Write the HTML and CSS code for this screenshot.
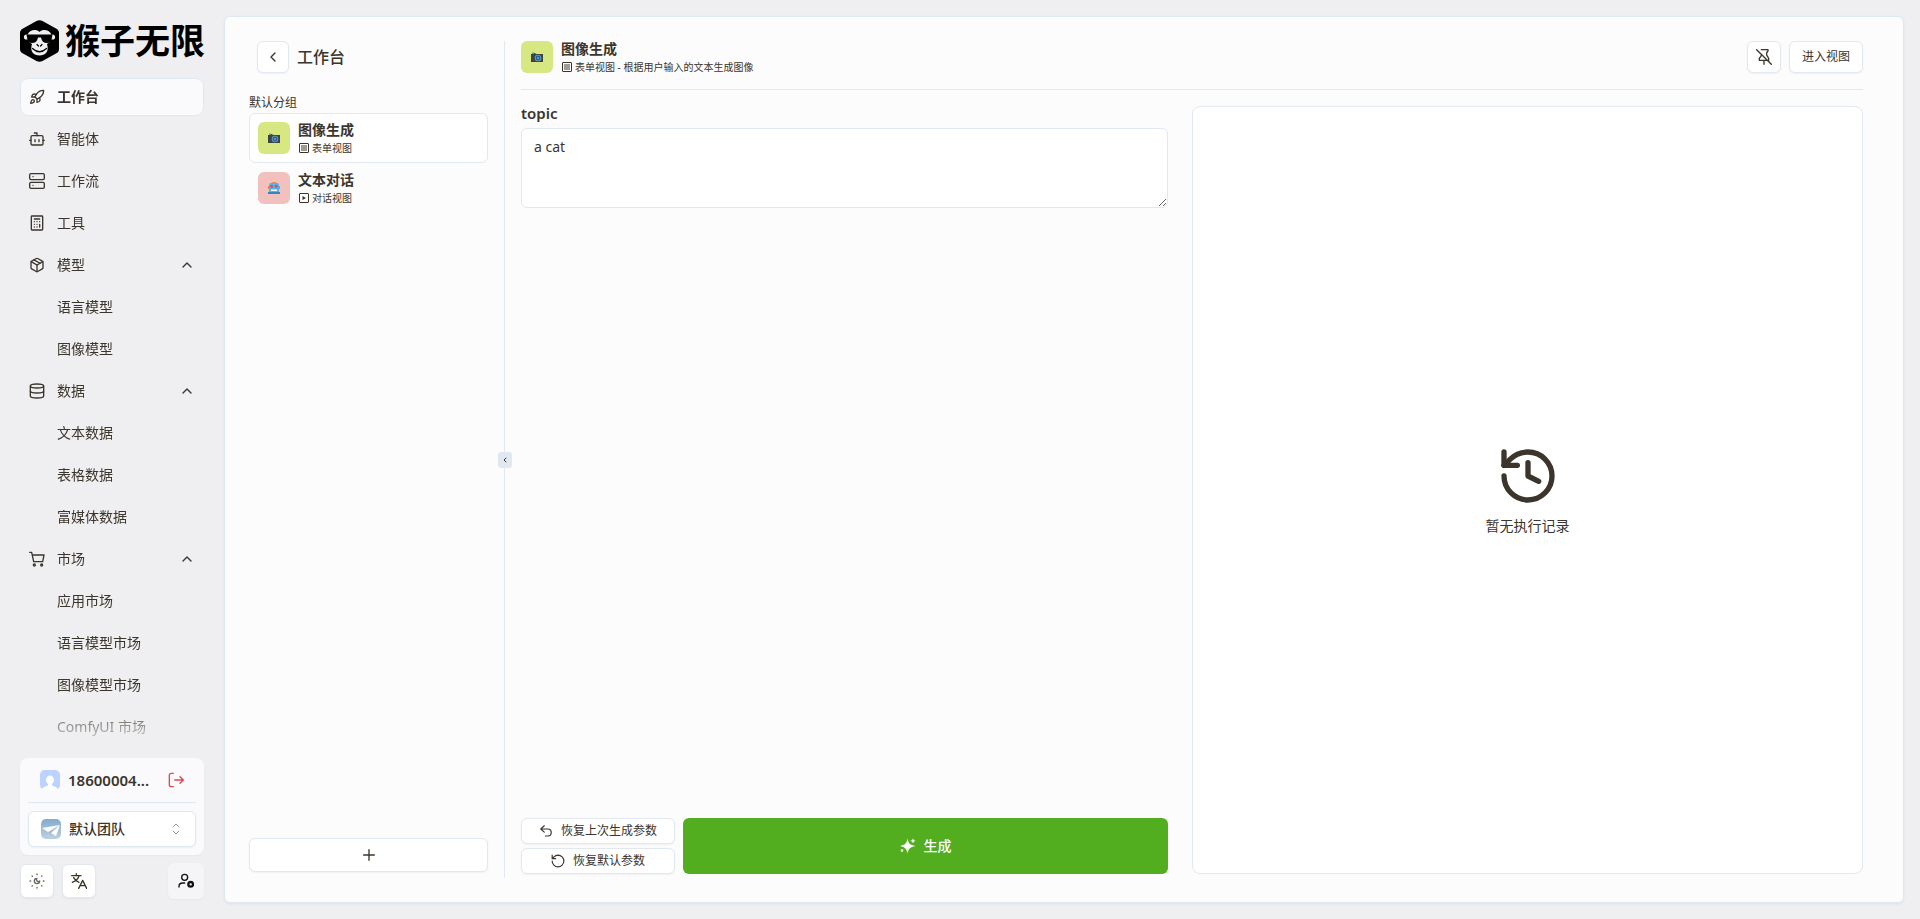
FILE: index.html
```html
<!DOCTYPE html>
<html lang="zh-CN">
<head>
    <meta charset="UTF-8">
    <meta name="viewport" content="width=device-width, initial-scale=1.0">
    <title>工作台</title>
    <link rel="stylesheet" href="styles.css">
</head>
<body>
    <aside class="sidebar">
        <div class="logo">
            <svg class="logo-mark" viewBox="0 0 39 42">
                <path d="M16.500 1 Q19.500 -.6 22.500 1 L36 8.500 Q39 10 39 13 V29 Q39 32 36 33.500 L22.500 41 Q19.500 42.600 16.500 41 L3 33.500 Q0 32 0 29 V13 Q0 10 3 8.500Z" fill="#000"/>
                <circle cx="6.500" cy="17" r="2.600" fill="#efeff1"/>
                <circle cx="32.500" cy="17" r="2.600" fill="#efeff1"/>
                <path d="M19.500 12 C16 8.500 9 10 7.500 15 C6.500 20 9 22 12 24 C9.500 32 14 35.500 19.500 35.500 S29.500 32 27 24 C30 22 32.500 20 31.500 15 C30 10 23 8.500 19.500 12Z" fill="#efeff1"/>
                <path d="M6.500 14.500 H32.500 L31.500 20 Q30.500 23 27 23 Q22 23 21 17.500 H18 Q17 23 12 23 Q8.500 23 7.500 20Z" fill="#000"/>
                <path d="M17 24.500 l1.500 1.500 M22 24.500 l-1.500 1.500 M12.500 28.500 Q19.500 35 26.500 28.500" fill="none" stroke="#000" stroke-width="1.200" stroke-linecap="round"/>
            </svg>
            <span class="logo-text">猴子无限</span>
        </div>

        <nav class="nav">
            <a class="nav-item active" href="#">
                <svg class="icon" viewBox="0 0 24 24"><path d="M4.500 16.500c-1.500 1.260-2 5-2 5s3.740-.5 5-2c.71-.84.7-2.130-.09-2.910a2.180 2.180 0 0 0-2.910-.09z"/><path d="m12 15-3-3a22 22 0 0 1 2-3.950A12.880 12.880 0 0 1 22 2c0 2.720-.78 7.500-6 11a22.350 22.350 0 0 1-4 2z"/><path d="M9 12H4s.55-3.030 2-4c1.620-1.080 5 0 5 0"/><path d="M12 15v5s3.030-.55 4-2c1.080-1.620 0-5 0-5"/></svg>
                <span>工作台</span>
            </a>
            <a class="nav-item" href="#">
                <svg class="icon" viewBox="0 0 24 24"><path d="M12 7V3H8"/><rect width="18" height="14" x="3" y="7" rx="2"/><path d="M1 14h2M21 14h2M15 13v3M9 13v3"/></svg>
                <span>智能体</span>
            </a>
            <a class="nav-item" href="#">
                <svg class="icon" viewBox="0 0 24 24"><rect width="22" height="9" x="1" y="1" rx="2"/><rect width="22" height="9" x="1" y="14" rx="2"/><path d="M6 5.500h.01M6 18.500h.01"/></svg>
                <span>工作流</span>
            </a>
            <a class="nav-item" href="#">
                <svg class="icon" viewBox="0 0 24 24"><rect width="17" height="21" x="3.500" y="1.500" rx="1"/><path d="M8 6h8M16 14v4M16 10h.01M12 10h.01M8 10h.01M12 14h.01M8 14h.01M12 18h.01M8 18h.01"/></svg>
                <span>工具</span>
            </a>
            <button class="nav-item" type="button">
                <svg class="icon" viewBox="0 0 24 24"><path d="M11 21.730a2 2 0 0 0 2 0l7-4A2 2 0 0 0 21 16V8a2 2 0 0 0-1-1.730l-7-4a2 2 0 0 0-2 0l-7 4A2 2 0 0 0 3 8v8a2 2 0 0 0 1 1.730z"/><path d="M12 22V12"/><path d="m3.300 7 8.700 5 8.700-5"/><path d="m7.500 4.270 9 5.150"/></svg>
                <span>模型</span>
                <svg class="icon chevron" viewBox="0 0 24 24"><path d="m18 15-6-6-6 6"/></svg>
            </button>
            <a class="nav-item sub" href="#">语言模型</a>
            <a class="nav-item sub" href="#">图像模型</a>
            <button class="nav-item" type="button">
                <svg class="icon" viewBox="0 0 24 24"><ellipse cx="12" cy="4.500" rx="10" ry="3"/><path d="M2 4.500v15c0 1.700 4.500 3 10 3s10-1.300 10-3v-15"/><path d="M2 12c0 1.700 4.500 3 10 3s10-1.300 10-3"/></svg>
                <span>数据</span>
                <svg class="icon chevron" viewBox="0 0 24 24"><path d="m18 15-6-6-6 6"/></svg>
            </button>
            <a class="nav-item sub" href="#">文本数据</a>
            <a class="nav-item sub" href="#">表格数据</a>
            <a class="nav-item sub" href="#">富媒体数据</a>
            <button class="nav-item" type="button">
                <svg class="icon" viewBox="0 0 24 24"><circle cx="8" cy="21" r="1.500"/><circle cx="19" cy="21" r="1.500"/><path d="M1 2h3l3 14h13.500l2-10H5"/></svg>
                <span>市场</span>
                <svg class="icon chevron" viewBox="0 0 24 24"><path d="m18 15-6-6-6 6"/></svg>
            </button>
            <a class="nav-item sub" href="#">应用市场</a>
            <a class="nav-item sub" href="#">语言模型市场</a>
            <a class="nav-item sub" href="#">图像模型市场</a>
            <a class="nav-item sub" href="#">ComfyUI 市场</a>
        </nav>

        <div class="account">
            <div class="user">
                <svg class="avatar" viewBox="0 0 20 20"><rect width="20" height="20" rx="5" fill="#bcd2ff"/><path d="M2 20c0-3 4-3.500 6-4.500v-1.500C5 12 5.500 5.500 10 5.500S15 12 12 14v1.500c2 1 6 1.500 6 4.500z" fill="#fff"/></svg>
                <span class="user-name">18600004...</span>
                <button class="logout" type="button" aria-label="退出登录">
                    <svg class="icon" viewBox="0 0 24 24"><path d="M8 2H5a3 3 0 0 0-3 3v14a3 3 0 0 0 3 3h3M10 12h13M18 7l5 5-5 5"/></svg>
                </button>
            </div>
            <div class="team">
                <svg class="avatar" viewBox="0 0 20 20"><defs><linearGradient id="sky" x2="0" y2="1"><stop stop-color="#83abcd"/><stop offset="1" stop-color="#bad1e3"/></linearGradient></defs><rect width="20" height="20" rx="5" fill="url(#sky)"/><path d="M1 9l18-3-4 11-5-3-2 4-1-5z" fill="#fff"/><path d="M7 13l12-7-9 8-2 4z" fill="#a9b9d2"/></svg>
                <select class="team-select" aria-label="团队">
                    <option>默认团队</option>
                </select>
                <svg class="icon arrows" viewBox="0 0 24 24"><path d="m6 16 6 6 6-6M6 8l6-6 6 6"/></svg>
            </div>
        </div>

        <div class="tools">
            <button class="btn tool-btn" type="button" aria-label="主题">
                <svg class="icon theme" viewBox="0 0 24 24"><path d="M12 8a2.830 2.830 0 0 0 4 4 4 4 0 1 1-4-4M12 1.500v1M12 21.500v1M4.600 4.600l.5.5M18.900 18.900l.5.5M1.500 12h1M21.500 12h1M5.100 18.900l-.5.5M19.400 4.600l-.5.5"/></svg>
            </button>
            <button class="btn tool-btn" type="button" aria-label="语言">
                <svg class="icon" viewBox="0 0 24 24"><path d="M1 4h14M8 1v3M12 4c-1 5-5 8-10 10M4 7c1.500 3 5 6 8 7M11.500 23 17.500 11l6 12M13.500 19h8"/></svg>
            </button>
            <button class="tool-btn user-settings" type="button" aria-label="账号设置">
                <svg class="icon" viewBox="0 0 24 24"><circle cx="10" cy="6.500" r="4.500"/><path d="M1.500 21v-1c0-3 2-5 5.500-5h3"/><circle cx="19" cy="17" r="3.500" stroke-width="3.500"/></svg>
            </button>
        </div>
    </aside>

    <main class="panel">
        <section class="apps">
            <header class="apps-header">
                <button class="btn back" type="button" aria-label="返回">
                    <svg class="icon" viewBox="0 0 24 24"><path d="m15 18-6-6 6-6"/></svg>
                </button>
                <h1>工作台</h1>
            </header>
            <h2 class="group-title">默认分组</h2>
            <a class="app selected" href="#">
                <span class="app-icon green">
                    <svg viewBox="0 0 12 12"><path d="M0 3h1V2h3l1 1h7v8H0z" fill="#3b4447"/><path d="M1 1.500h2V3H1z" fill="#83929b"/><circle cx="7" cy="7" r="3.300" fill="#7b99aa"/><circle cx="7" cy="7" r="2.400" fill="#245b91"/><circle cx="7" cy="7" r="1.200" fill="#43a1e0"/></svg>
                </span>
                <span class="app-text">
                    <span class="app-name">图像生成</span>
                    <span class="app-meta"><svg viewBox="0 0 10 10"><rect x=".5" y=".5" width="9" height="9" rx=".5" fill="none" stroke="#3b352b"/><path d="M2 2h6v6H2z" fill="#9d9a95"/></svg>表单视图</span>
                </span>
            </a>
            <a class="app" href="#">
                <span class="app-icon pink">
                    <svg viewBox="0 0 12 12"><path d="M3 1Q6-1 9 1z" fill="#d69034"/><path d="M1 11V3q0-2 2-2h6q2 0 2 2v8z" fill="#51b3ef"/><path d="M0 4h1v3H0zM11 4h1v3h-1z" fill="#e57f45"/><circle cx="3.700" cy="4.500" r="1.400" fill="#e34859"/><circle cx="8.300" cy="4.500" r="1.400" fill="#e34859"/><path d="M3 7.500h6V9H3z" fill="#fff"/><path d="M0 10h12v2H0z" fill="#3586c5"/></svg>
                </span>
                <span class="app-text">
                    <span class="app-name">文本对话</span>
                    <span class="app-meta"><svg viewBox="0 0 10 10"><rect x=".5" y=".5" width="9" height="9" rx=".5" fill="none" stroke="#3b352b"/><path d="M3.500 3v4L7 5z" fill="#3b352b"/></svg>对话视图</span>
                </span>
            </a>
            <button class="btn add" type="button" aria-label="新建">
                <svg class="icon" viewBox="0 0 24 24"><path d="M4 12h16M12 4v16"/></svg>
            </button>
        </section>

        <div class="divider">
            <button class="handle" type="button" aria-label="收起">
                <svg class="icon" viewBox="0 0 24 24"><path d="m15 18-6-6 6-6"/></svg>
            </button>
        </div>

        <section class="view">
            <header class="view-header">
                <span class="app-icon green">
                    <svg viewBox="0 0 12 12"><path d="M0 3h1V2h3l1 1h7v8H0z" fill="#3b4447"/><path d="M1 1.500h2V3H1z" fill="#83929b"/><circle cx="7" cy="7" r="3.300" fill="#7b99aa"/><circle cx="7" cy="7" r="2.400" fill="#245b91"/><circle cx="7" cy="7" r="1.200" fill="#43a1e0"/></svg>
                </span>
                <div class="app-text">
                    <span class="app-name">图像生成</span>
                    <span class="app-meta"><svg viewBox="0 0 10 10"><rect x=".5" y=".5" width="9" height="9" rx=".5" fill="none" stroke="#3b352b"/><path d="M2 2h6v6H2z" fill="#9d9a95"/></svg>表单视图 - 根据用户输入的文本生成图像</span>
                </div>
                <button class="btn pin" type="button" aria-label="取消固定">
                    <svg class="icon" viewBox="0 0 24 24"><path d="M12 17v6M1 1l22 22M8 1h10v2c0 1-2 1-2 3v3l3 5v3M8 8v2l-3 4v3h11"/></svg>
                </button>
                <button class="btn enter" type="button">进入视图</button>
            </header>

            <div class="view-body">
                <form class="form">
                    <label for="topic">topic</label>
                    <textarea id="topic">a cat</textarea>
                    <div class="form-actions">
                        <div class="restore">
                            <button class="btn" type="button">
                                <svg class="icon" viewBox="0 0 24 24"><path d="M9 14 3 8.500 9 3M3 8.500h12a6 6 0 0 1 0 12h-4"/></svg>
                                恢复上次生成参数
                            </button>
                            <button class="btn" type="button">
                                <svg class="icon" viewBox="0 0 24 24"><path d="M2 12a10 10 0 1 0 10-10 10.500 10.500 0 0 0-7 3L2 8M2 2v6h6"/></svg>
                                恢复默认参数
                            </button>
                        </div>
                        <button class="generate" type="button">
                            <svg class="sparkle" viewBox="0 0 16 16"><path d="M7.500.5C8.500 5.500 9.700 7 15.500 8 9.700 9.500 8.500 10.500 7.500 15.500 6.500 10.500 5.300 9.500 0 8 5.300 7 6.500 5.500 7.500.5zM13 0c.4 1.900.8 2.300 2.800 2.800-2 .5-2.400.9-2.800 2.800-.4-1.900-.8-2.300-2.800-2.800C12.200 2.300 12.600 1.900 13 0z"/><circle cx="2" cy="12.500" r="1.300"/></svg>
                            生成
                        </button>
                    </div>
                </form>

                <div class="records">
                    <svg class="icon history" viewBox="0 0 24 24"><path d="M3 12a9 9 0 1 0 9-9 9.750 9.750 0 0 0-6.740 2.740L3 8"/><path d="M3 3v5h5"/><path d="M12 7v5l4 2"/></svg>
                    <p>暂无执行记录</p>
                </div>
            </div>
        </section>
    </main>
</body>
</html>
```

FILE: styles.css
```css
* {
    box-sizing: border-box;
}
body {
    display: flex;
    gap: 20px;
    height: 100vh;
    margin: 0;
    padding: 16px 16px 16px 20px;
    background: #efeff1;
    color: #3b352b;
    font-family: "Noto Sans", "Noto Sans CJK SC", sans-serif;
    font-size: 14px;
    line-height: 20px;
}
button, textarea, select {
    color: inherit;
    font: inherit;
}
button {
    cursor: pointer;
}
a {
    color: inherit;
    text-decoration: none;
}
h1, h2, p {
    margin: 0;
}
.icon {
    width: 16px;
    height: 16px;
    flex-shrink: 0;
    fill: none;
    stroke: currentColor;
    stroke-width: 2;
    stroke-linecap: round;
    stroke-linejoin: round;
}
.btn {
    display: flex;
    align-items: center;
    justify-content: center;
    gap: 8px;
    padding: 0;
    background: #fff;
    border: 1px solid #e2e8f0;
    border-radius: 6px;
    box-shadow: 0 1px 2px rgba(0, 0, 0, 0.05);
    font-size: 12px;
}

/* sidebar */
.sidebar {
    display: flex;
    flex-direction: column;
    flex-shrink: 0;
    width: 184px;
    padding-top: 4px;
}
.logo {
    display: flex;
    align-items: flex-start;
    gap: 6px;
    margin-bottom: 16px;
    color: #000;
}
.logo-mark {
    width: 39px;
    height: 42px;
    flex-shrink: 0;
}
.logo-text {
    font-family: "Noto Sans CJK SC", sans-serif;
    font-size: 35px;
    font-weight: 700;
    line-height: 38px;
    white-space: nowrap;
}
.nav {
    display: flex;
    flex-direction: column;
    flex: 1;
    gap: 4px;
    min-height: 0;
    overflow: hidden;
    -webkit-mask-image: linear-gradient(#000 calc(100% - 48px), transparent);
    mask-image: linear-gradient(#000 calc(100% - 48px), transparent);
}
.nav-item {
    display: flex;
    align-items: center;
    flex-shrink: 0;
    gap: 12px;
    height: 38px;
    padding: 0 8px;
    background: none;
    border: 1px solid transparent;
    border-radius: 8px;
}
.nav-item.active {
    background: #fafafd;
    border-color: #dde8f3;
    font-weight: 600;
}
.nav-item.sub {
    padding-left: 36px;
}
.chevron {
    margin-left: auto;
}
.account {
    margin-top: 8px;
    padding: 8px;
    background: #fafafd;
    border-radius: 8px;
    box-shadow: 0 1px 2px rgba(0, 0, 0, 0.03);
}
.user {
    display: flex;
    align-items: center;
    gap: 8px;
    height: 37px;
    margin-bottom: 8px;
    padding: 0 12px 8px;
    border-bottom: 1px solid #dde8f3;
}
.avatar {
    width: 20px;
    height: 20px;
    flex-shrink: 0;
}
.user-name {
    font-size: 15px;
    font-weight: 600;
}
.logout {
    display: flex;
    margin-left: auto;
    padding: 0;
    background: none;
    border: 0;
    color: #dc4a50;
}
.team {
    position: relative;
}
.team .avatar {
    position: absolute;
    top: 8px;
    left: 13px;
}
.team-select {
    display: block;
    width: 100%;
    height: 36px;
    padding: 0 36px 0 40px;
    appearance: none;
    background: #fff;
    border: 1px solid #dfe7f0;
    border-radius: 6px;
    box-shadow: 0 1px 2px rgba(0, 0, 0, 0.05);
    font-weight: 500;
}
.arrows {
    position: absolute;
    top: 12px;
    right: 14px;
    width: 12px;
    height: 12px;
    color: #999;
}
.tools {
    display: flex;
    align-items: center;
    gap: 8px;
    margin-top: 8px;
    padding-bottom: 4px;
}
.tool-btn {
    width: 34px;
    height: 34px;
}
.theme {
    color: #6b665e;
}
.user-settings {
    display: flex;
    align-items: center;
    justify-content: center;
    width: 36px;
    height: 36px;
    margin-left: auto;
    background: #f5f5f8;
    border: 0;
    border-radius: 6px;
    box-shadow: 0 1px 2px rgba(0, 0, 0, 0.04);
    color: #111;
}

/* main panel */
.panel {
    display: flex;
    flex: 1;
    gap: 16px;
    min-width: 0;
    padding: 24px;
    background: #fcfcfd;
    border: 1px solid #dfe8f1;
    border-radius: 6px;
    box-shadow: 0 1px 3px rgba(0, 0, 0, 0.06);
}
.apps {
    display: flex;
    flex-direction: column;
    flex-shrink: 0;
    width: 239px;
    padding-bottom: 6px;
}
.apps-header {
    display: flex;
    align-items: center;
    gap: 8px;
    margin-bottom: 20px;
    padding-left: 8px;
}
.back {
    width: 32px;
    height: 32px;
}
h1 {
    font-size: 16px;
    font-weight: 500;
    line-height: 24px;
}
.group-title {
    font-size: 12px;
    font-weight: 400;
}
.app {
    display: flex;
    align-items: center;
    gap: 8px;
    height: 50px;
    padding: 0 8px;
    border: 1px solid transparent;
    border-radius: 6px;
}
.app.selected {
    background: #fff;
    border-color: #e2e8f0;
}
.app-icon {
    display: flex;
    align-items: center;
    justify-content: center;
    width: 32px;
    height: 32px;
    flex-shrink: 0;
    border-radius: 6px;
}
.app-icon svg {
    width: 12px;
    height: 12px;
}
.green {
    background: #d7e883;
}
.pink {
    background: #f2c1be;
}
.app-text {
    display: flex;
    flex-direction: column;
}
.app-name {
    font-weight: 600;
    line-height: 20px;
}
.app-meta {
    display: flex;
    align-items: center;
    gap: 3px;
    padding-left: 1px;
    font-size: 10px;
    line-height: 16px;
}
.app-meta svg {
    width: 10px;
    height: 10px;
}
.add {
    height: 34px;
    margin-top: auto;
}
.divider {
    position: relative;
    width: 1px;
    flex-shrink: 0;
    background: #e2e8f0;
}
.handle {
    position: absolute;
    top: 50%;
    left: 50%;
    display: flex;
    align-items: center;
    justify-content: center;
    width: 14px;
    height: 16px;
    padding: 0;
    background: #e2e8f0;
    border: 0;
    border-radius: 3px;
    transform: translate(-50%, -50%);
}
.handle .icon {
    width: 8px;
    height: 8px;
    stroke-width: 3;
}

/* form view */
.view {
    display: flex;
    flex: 1;
    flex-direction: column;
    min-width: 0;
    padding: 0 16px 4px 0;
}
.view-header {
    display: flex;
    align-items: center;
    gap: 8px;
    height: 49px;
    margin-bottom: 16px;
    padding-bottom: 16px;
    border-bottom: 1px solid #e2e8f0;
}
.pin {
    width: 34px;
    height: 32px;
    margin-left: auto;
}
.enter {
    height: 32px;
    padding: 0 12px;
}
.view-body {
    display: grid;
    grid-template-columns: 1fr 1fr;
    flex: 1;
}
.form {
    display: flex;
    flex-direction: column;
    padding-right: 24px;
}
.form label {
    margin-bottom: 8px;
    font-size: 15px;
    font-weight: 600;
    line-height: 14px;
}
.form textarea {
    width: 100%;
    height: 80px;
    padding: 8px 12px;
    background: #fff;
    border: 1px solid #e2e8f0;
    border-radius: 6px;
    outline: none;
}
.form-actions {
    display: flex;
    gap: 8px;
    margin-top: auto;
}
.restore {
    display: flex;
    flex-direction: column;
    flex-shrink: 0;
    gap: 4px;
    width: 154px;
}
.restore .btn {
    height: 26px;
}
.restore .icon {
    width: 14px;
    height: 14px;
}
.generate {
    display: flex;
    align-items: center;
    justify-content: center;
    flex: 1;
    gap: 8px;
    background: #53ae1f;
    border: 0;
    border-radius: 6px;
    color: #fff;
    font-weight: 500;
}
.sparkle {
    width: 16px;
    height: 16px;
    fill: #fff;
}
.records {
    display: flex;
    flex-direction: column;
    align-items: center;
    justify-content: center;
    gap: 8px;
    background: #fff;
    border: 1px solid #e2e8f0;
    border-radius: 8px;
}
.history {
    width: 64px;
    height: 64px;
}
```
